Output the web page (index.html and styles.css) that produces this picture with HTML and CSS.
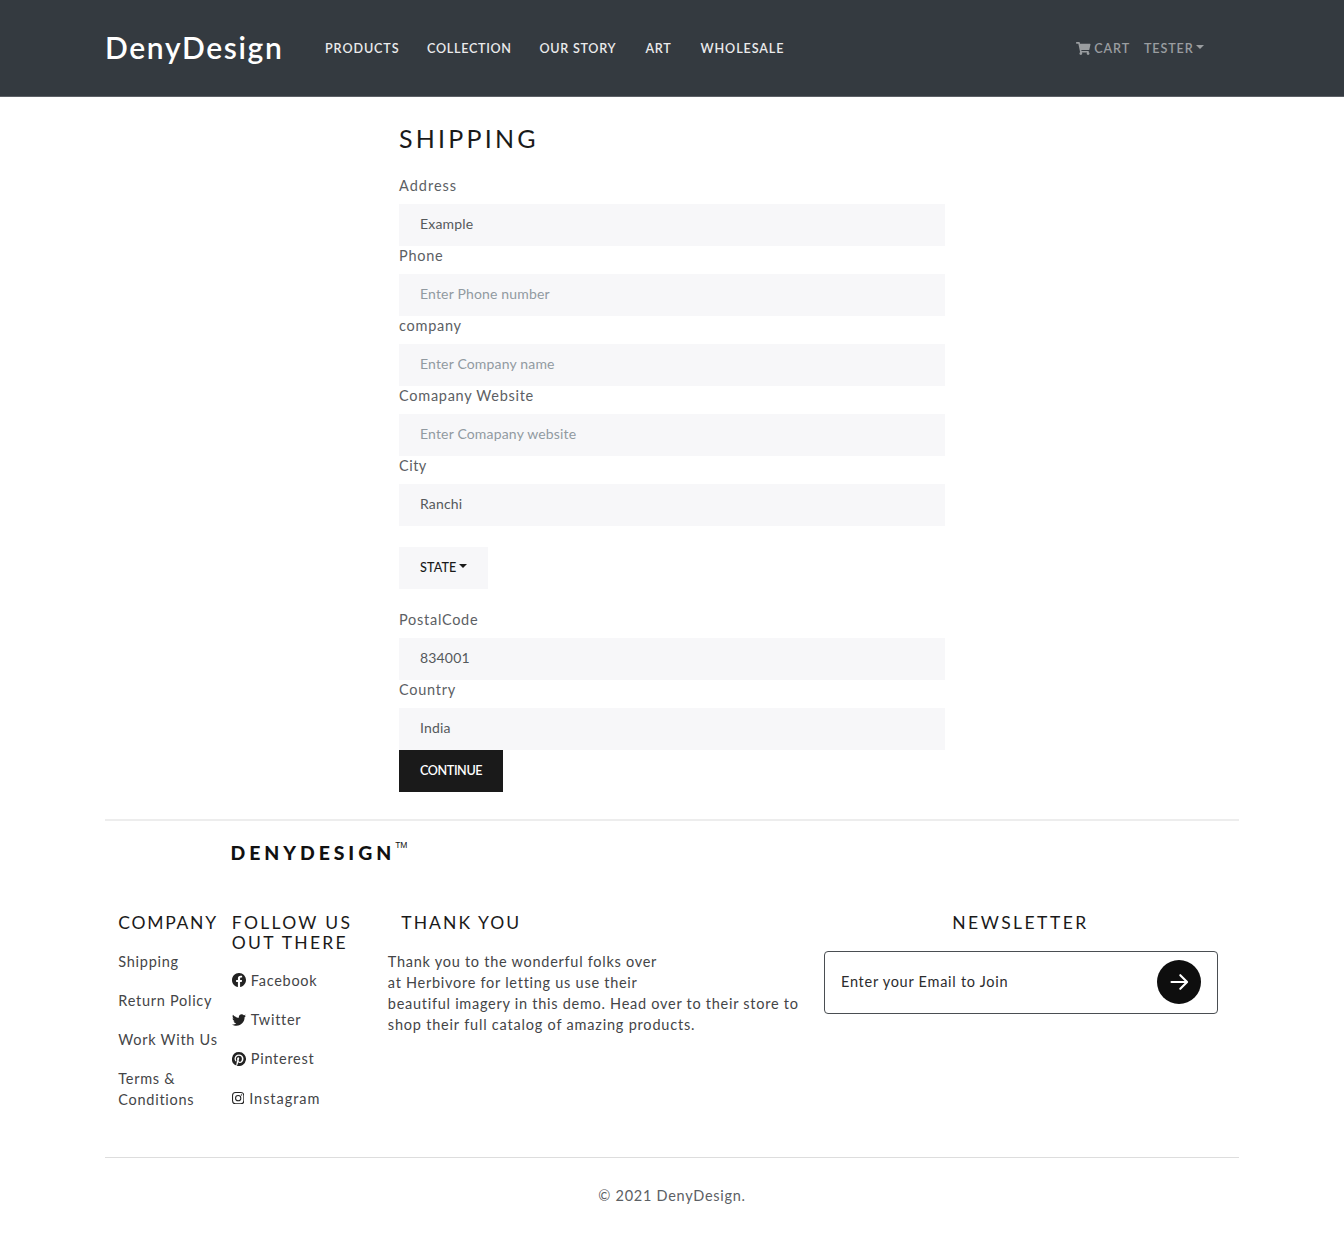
FILE: index.html
```html
<!DOCTYPE html>
<html lang="en">
<head>
<meta charset="utf-8">
<title>DenyDesign</title>
<link rel="stylesheet" href="styles.css">
</head>
<body>
<header class="navbar">
  <a class="brand">DenyDesign</a>
  <nav class="menu">
    <a class="menu-wide">Products</a>
    <a>Collection</a>
    <a>Our Story</a>
    <a>Art</a>
    <a class="menu-wide">Wholesale</a>
  </nav>
  <div class="account">
    <a class="cart"><svg class="cart-icon" viewBox="0 0 576 512"><path fill="currentColor" d="M528.12 301.319l47.273-208C578.806 78.301 567.391 64 551.99 64H159.208l-9.166-44.81C147.758 8.021 137.93 0 126.529 0H24C10.745 0 0 10.745 0 24v16c0 13.255 10.745 24 24 24h69.883l70.248 343.435C147.325 417.1 136 435.222 136 456c0 30.928 25.072 56 56 56s56-25.072 56-56c0-15.674-6.447-29.835-16.824-40h209.647C430.447 426.165 424 440.326 424 456c0 30.928 25.072 56 56 56s56-25.072 56-56c0-22.172-12.888-41.332-31.579-50.405l5.517-24.276c3.413-15.018-8.002-29.319-23.403-29.319H218.117l-6.545-32h293.145c11.206 0 20.92-7.754 23.403-18.681z"/></svg>Cart</a>
    <a class="user">Tester<span class="caret"></span></a>
  </div>
</header>

<main class="shipping">
  <h1>Shipping</h1>
  <form>
    <label class="label-wide">Address</label>
    <input type="text" value="Example">
    <label>Phone</label>
    <input type="text" placeholder="Enter Phone number">
    <label>company</label>
    <input type="text" placeholder="Enter Company name">
    <label>Comapany Website</label>
    <input type="text" placeholder="Enter Comapany website">
    <label class="label-tight">City</label>
    <input type="text" value="Ranchi">
    <button type="button" class="btn btn-state">State<span class="caret"></span></button>
    <label>PostalCode</label>
    <input type="text" value="834001">
    <label>Country</label>
    <input type="text" value="India">
    <button type="button" class="btn btn-continue">Continue</button>
  </form>
</main>

<footer class="footer">
  <div class="footer-logo">DENYDESIGN<span class="tm">TM</span></div>
  <div class="footer-columns">
    <section>
      <h2 class="company-title">Company</h2>
      <ul>
        <li>Shipping</li>
        <li>Return Policy</li>
        <li>Work With Us</li>
        <li>Terms &amp;<br>Conditions</li>
      </ul>
    </section>
    <section>
      <h2 class="follow-title">Follow us<br>out there</h2>
      <ul>
        <li><svg class="icon" viewBox="0 0 16 16"><path fill="currentColor" d="M16 8.049c0-4.446-3.582-8.05-8-8.05C3.58 0-.002 3.603-.002 8.05c0 4.017 2.926 7.347 6.75 7.951v-5.625h-2.03V8.05H6.75V6.275c0-2.017 1.195-3.131 3.022-3.131.876 0 1.791.157 1.791.157v1.98h-1.009c-.993 0-1.303.621-1.303 1.258v1.51h2.218l-.354 2.326H9.25V16c3.824-.604 6.75-3.934 6.75-7.951z"/></svg>Facebook</li>
        <li><svg class="icon" viewBox="0 0 512 512"><path fill="currentColor" d="M459.37 151.716c.325 4.548.325 9.097.325 13.645 0 138.72-105.583 298.558-298.558 298.558-59.452 0-114.68-17.219-161.137-47.106 8.447.974 16.568 1.299 25.34 1.299 49.055 0 94.213-16.568 130.274-44.832-46.132-.975-84.792-31.188-98.112-72.772 6.498.974 12.995 1.624 19.818 1.624 9.421 0 18.843-1.3 27.614-3.573-48.081-9.747-84.143-51.98-84.143-102.985v-1.299c13.969 7.797 30.214 12.67 47.431 13.319-28.264-18.843-46.781-51.005-46.781-87.391 0-19.492 5.197-37.36 14.294-52.954 51.655 63.675 129.3 105.258 216.365 109.807-1.624-7.797-2.599-15.918-2.599-24.04 0-57.828 46.782-104.934 104.934-104.934 30.213 0 57.502 12.67 76.67 33.137 23.715-4.548 46.456-13.32 66.599-25.34-7.798 24.366-24.366 44.833-46.132 57.827 21.117-2.273 41.584-8.122 60.426-16.243-14.292 20.791-32.161 39.308-52.628 54.253z"/></svg>Twitter</li>
        <li><svg class="icon" viewBox="0 0 16 16"><path fill="currentColor" d="M8 0a8 8 0 0 0-2.915 15.452c-.07-.633-.134-1.606.027-2.297.146-.625.938-3.977.938-3.977s-.239-.479-.239-1.187c0-1.113.645-1.943 1.448-1.943.682 0 1.012.512 1.012 1.127 0 .686-.437 1.712-.663 2.663-.188.796.4 1.446 1.185 1.446 1.422 0 2.515-1.5 2.515-3.664 0-1.915-1.377-3.254-3.342-3.254-2.276 0-3.612 1.707-3.612 3.471 0 .688.265 1.425.595 1.826a.24.24 0 0 1 .056.23c-.061.252-.196.796-.222.907-.035.146-.116.177-.268.107-1-.465-1.624-1.926-1.624-3.1 0-2.523 1.834-4.84 5.286-4.84 2.775 0 4.932 1.977 4.932 4.62 0 2.757-1.739 4.976-4.151 4.976-.811 0-1.573-.421-1.834-.919l-.498 1.902c-.181.695-.669 1.566-.995 2.097A8 8 0 1 0 8 0z"/></svg>Pinterest</li>
        <li class="instagram"><svg class="icon icon-small" viewBox="0 0 448 448" fill="none" stroke="currentColor" stroke-width="38"><rect x="20" y="20" width="408" height="408" rx="108"/><circle cx="224" cy="224" r="95"/><circle cx="343" cy="105" r="26" fill="currentColor" stroke="none"/></svg>Instagram</li>
      </ul>
    </section>
    <section>
      <h2 class="thanks-title">Thank you</h2>
      <p>Thank you to the wonderful folks over<br>at Herbivore for letting us use their<br>beautiful imagery in this demo. Head over to their store to<br><span class="last-line">shop their full catalog of amazing products.</span></p>
    </section>
    <section class="newsletter">
      <h2 class="newsletter-title">Newsletter</h2>
      <div class="subscribe">
        <span class="subscribe-hint">Enter your Email to Join</span>
        <svg class="submit" viewBox="0 0 44 44"><circle cx="22" cy="22" r="22" fill="#0e0e0e"/><path d="M14.5 22h15.5M23.3 15.2L30.1 22l-6.8 6.8" fill="none" stroke="#fff" stroke-width="2.1" stroke-linecap="round" stroke-linejoin="round"/></svg>
      </div>
    </section>
  </div>
  <div class="copyright">© 2021 DenyDesign.</div>
</footer>
</body>
</html>
```
FILE: styles.css
```css
* { box-sizing: border-box; }

body {
  margin: 0;
  background: #fff;
  color: #5c6064;
  font: 14.5px/21px Lato, sans-serif;
  letter-spacing: 0.73px;
}

h1, h2, p, ul { margin: 0; padding: 0; font-weight: 400; }
ul { list-style: none; }

.navbar {
  display: flex;
  align-items: center;
  height: 97px;
  padding: 0 140px 0 105px;
  background: #343a40;
  border-bottom: 1px solid #5c6066;
  font-size: 12.6px;
  font-weight: 600;
  text-transform: uppercase;
}
.brand {
  width: 220px;
  padding-bottom: 2px;
  color: #fff;
  font-size: 30px;
  font-weight: 600;
  line-height: 40px;
  letter-spacing: 1.65px;
  text-transform: none;
}
.menu {
  display: grid;
  grid-template-columns: 102px 112.5px 106px 55px auto;
  color: #ebebec;
  letter-spacing: 0.7px;
}
.menu-wide { letter-spacing: 0.9px; }
.account {
  display: flex;
  gap: 14px;
  margin-left: auto;
  color: #9a9da0;
  letter-spacing: 0.85px;
}
.cart, .user { display: flex; align-items: center; }
.cart-icon { width: 14.5px; height: 13px; margin-right: 3.5px; }
.caret {
  width: 0;
  height: 0;
  border: 4px solid transparent;
  border-top-color: currentColor;
  border-bottom: 0;
  margin: 0 0 2px 2.5px;
}

.shipping { width: 546px; margin: 0 auto; padding-top: 27px; }
h1 {
  height: 52px;
  color: #1a1a1a;
  font-size: 25px;
  line-height: 28px;
  letter-spacing: 3.2px;
  text-transform: uppercase;
}
form { display: flex; flex-direction: column; align-items: flex-start; }
label { height: 28px; line-height: 20px; }
.label-wide { letter-spacing: 1px; }
.label-tight { letter-spacing: 0.5px; }
input {
  width: 100%;
  height: 42px;
  padding: 0 21px 3px;
  border: 0;
  background: #f7f7f9;
  color: #55595c;
  font: 14px Lato, sans-serif;
  letter-spacing: 0.17px;
}
input::placeholder { color: #919aa1; opacity: 1; }
.btn {
  display: flex;
  align-items: center;
  height: 42px;
  padding: 0 21px 2px;
  border: 0;
  font: 600 12.6px Lato, sans-serif;
  text-transform: uppercase;
}
.btn-state {
  width: 89px;
  margin: 21px 0;
  background: #f7f7f9;
  color: #1a1a1a;
  font-weight: 500;
  letter-spacing: 0.1px;
}
.btn-continue { width: 104px; background: #1a1a1a; color: #fff; letter-spacing: -0.4px; }

.footer {
  width: 1134px;
  margin: 27px auto 0;
  border-top: 2px solid #ededed;
  color: #444547;
}
.footer-logo {
  display: flex;
  height: 92px;
  padding: 20px 0 0 125.5px;
  color: #111;
  font-size: 19.4px;
  font-weight: 900;
  line-height: 24px;
  letter-spacing: 3.95px;
}
.tm { font: 8.5px/8px "Liberation Sans", sans-serif; letter-spacing: 0; }
.footer-columns {
  display: grid;
  grid-template-columns: 113.5px 156px 436.2px 394px;
  height: 244px;
  padding-left: 13.3px;
}
h2 {
  margin-bottom: 18.3px;
  color: #1a1a1a;
  font-size: 17.5px;
  line-height: 19.25px;
  letter-spacing: 2.2px;
  text-transform: uppercase;
}
.company-title { letter-spacing: 1.72px; }
.follow-title { margin-bottom: 16.8px; line-height: 20px; letter-spacing: 2.3px; }
.thanks-title { padding-left: 13.5px; letter-spacing: 2.05px; }
.newsletter-title { padding-left: 128.3px; letter-spacing: 2.46px; }
.last-line { letter-spacing: 0.8px; }
li { margin-bottom: 18.25px; }
.icon { width: 14px; height: 14px; margin-right: 5px; vertical-align: -1.5px; color: #222; }
.icon-small { width: 12.4px; height: 12.4px; vertical-align: -0.5px; }
.instagram { letter-spacing: 0.95px; }
.subscribe {
  display: flex;
  align-items: center;
  justify-content: space-between;
  height: 63px;
  padding: 0 16px;
  border: 1px solid #4a4e52;
  border-radius: 4px;
}
.subscribe-hint { padding-bottom: 2px; color: #2c2c2e; }
.submit { width: 44px; height: 44px; }
.copyright {
  padding-top: 27px;
  border-top: 1px solid #ddd;
  color: #5c6064;
  text-align: center;
}
```
